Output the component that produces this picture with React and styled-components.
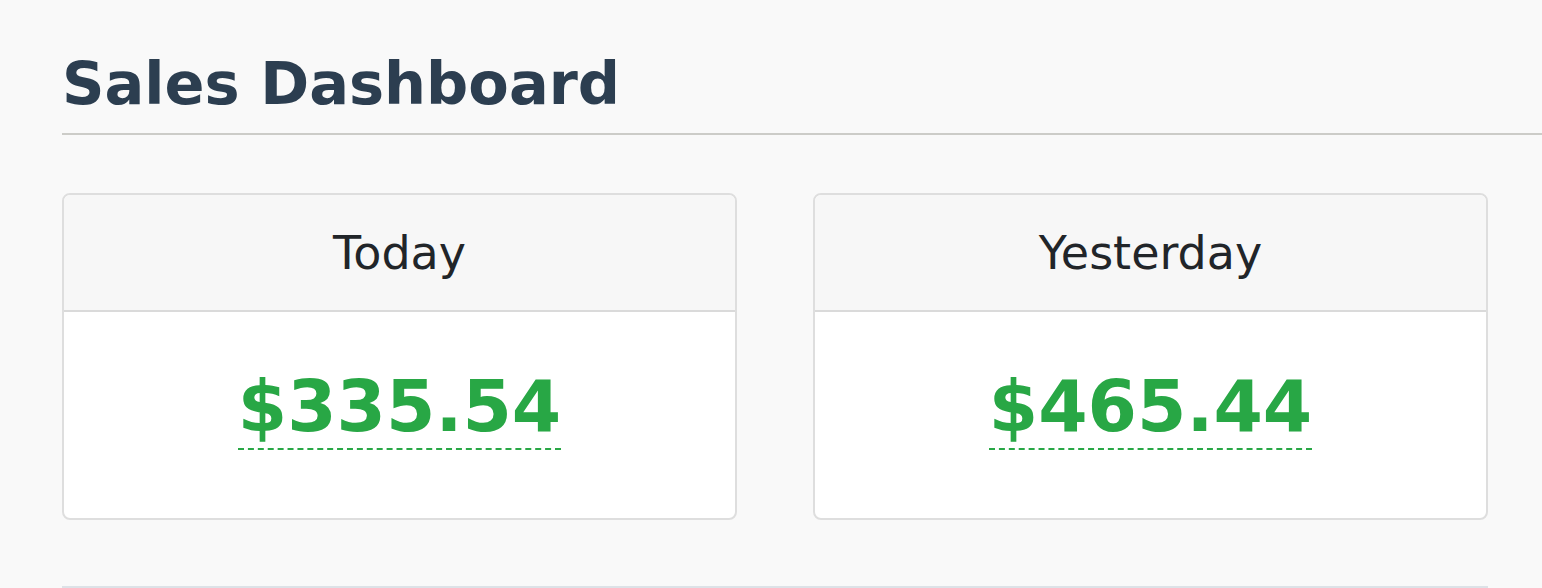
import React from 'react';
import styled, { createGlobalStyle } from 'styled-components';

const GlobalStyle = createGlobalStyle`
  html,
  body {
    margin: 0;
    padding: 0;
    background-color: #f9f9f9;
    font-family: 'DejaVu Sans', Verdana, sans-serif;
    overflow: hidden;
  }
`;

const Page = styled.main`
  min-height: 588px;
  padding: 49px 0 0 62px;
  box-sizing: border-box;
`;

const Title = styled.h1`
  margin: 0;
  padding-bottom: 15px;
  font-size: 59px;
  font-weight: 700;
  line-height: normal;
  color: #2c3e50;
  border-bottom: 2px solid #ccccc8;
`;

const Cards = styled.section`
  display: grid;
  grid-template-columns: 675px 675px;
  column-gap: 76px;
  width: 1426px;
  margin-top: 58px;
  padding-bottom: 66px;
  border-bottom: 2px solid #dde2e7;
`;

const Card = styled.div`
  display: flex;
  flex-direction: column;
  background-color: #fff;
  border: 2px solid #dedede;
  border-radius: 8px;
  overflow: hidden;
`;

const CardHeader = styled.div`
  padding: 31px 20px 30px;
  text-align: center;
  font-size: 46px;
  line-height: normal;
  color: #212529;
  background-color: #f7f7f7;
  border-bottom: 2px solid #dadada;
`;

const CardBody = styled.div`
  padding: 53px 20px 70px;
  text-align: center;
  line-height: normal;
`;

const Amount = styled.span`
  font-size: 71px;
  font-weight: 700;
  color: #28a745;
  border-bottom: 2px dashed #28a745;
`;

const sales = [
  { label: 'Today', amount: 335.54 },
  { label: 'Yesterday', amount: 465.44 },
];

export default function App() {
  return (
    <>
      <GlobalStyle />
      <Page>
        <Title>Sales Dashboard</Title>
        <Cards>
          {sales.map(item => (
            <Card key={item.label}>
              <CardHeader>{item.label}</CardHeader>
              <CardBody>
                <Amount>${item.amount.toFixed(2)}</Amount>
              </CardBody>
            </Card>
          ))}
        </Cards>
      </Page>
    </>
  );
}
